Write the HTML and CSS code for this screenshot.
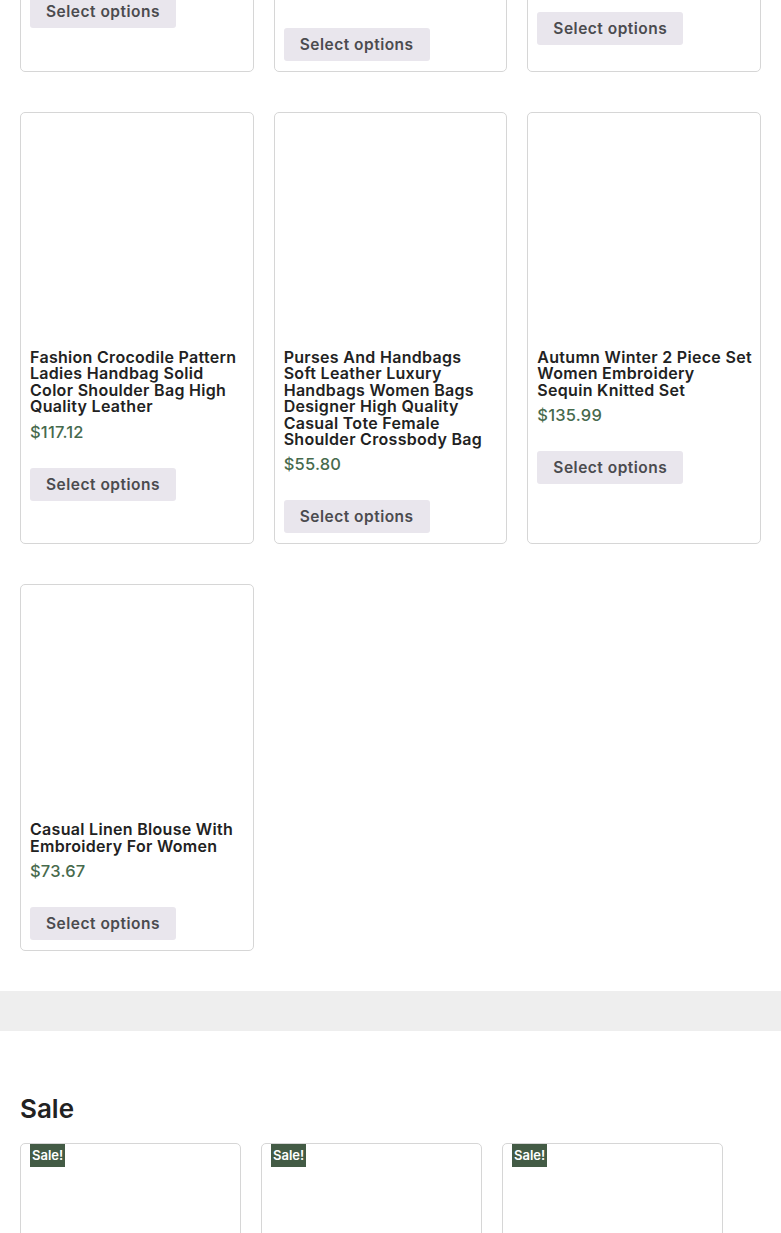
FILE: index.html
```html
<!DOCTYPE html>
<html lang="en">
<head>
<meta charset="utf-8">
<title>Shop</title>
<link rel="stylesheet" href="styles.css">
</head>
<body>
<main class="shop">
  <div class="clip">
    <ul class="grid">
      <li class="card">
        <div class="thumb"></div>
        <h2 class="title">Knitted Cardigan Sweater<br>For Women</h2>
        <span class="price">$48.20</span>
        <a class="button" href="#">Select options</a>
      </li>
      <li class="card">
        <div class="thumb"></div>
        <h2 class="title">Vintage Leather Crossbody<br>Bag Women Small Square<br>Shoulder Messenger<br>Purse</h2>
        <span class="price">$39.90</span>
        <a class="button" href="#">Select options</a>
      </li>
      <li class="card">
        <div class="thumb"></div>
        <h2 class="title">Women Casual Loose<br>Long Sleeve Solid Color<br>Shirt</h2>
        <span class="price">$52.10</span>
        <a class="button" href="#">Select options</a>
      </li>
    </ul>
  </div>

  <ul class="grid rows">
    <li class="card">
      <div class="thumb"></div>
      <h2 class="title">Fashion Crocodile Pattern<br>Ladies Handbag Solid<br>Color Shoulder Bag High<br>Quality Leather</h2>
      <span class="price">$117.12</span>
      <a class="button" href="#">Select options</a>
    </li>
    <li class="card">
      <div class="thumb"></div>
      <h2 class="title">Purses And Handbags<br>Soft Leather Luxury<br>Handbags Women Bags<br>Designer High Quality<br>Casual Tote Female<br>Shoulder Crossbody Bag</h2>
      <span class="price">$55.80</span>
      <a class="button" href="#">Select options</a>
    </li>
    <li class="card">
      <div class="thumb"></div>
      <h2 class="title">Autumn Winter 2 Piece Set<br>Women Embroidery<br>Sequin Knitted Set</h2>
      <span class="price">$135.99</span>
      <a class="button" href="#">Select options</a>
    </li>
    <li class="card">
      <div class="thumb"></div>
      <h2 class="title">Casual Linen Blouse With<br>Embroidery For Women</h2>
      <span class="price">$73.67</span>
      <a class="button" href="#">Select options</a>
    </li>
  </ul>
</main>

<div class="band"></div>

<section class="sale">
  <h2 class="sale-heading">Sale</h2>
  <ul class="sale-grid">
    <li class="card sale-card">
      <span class="badge">Sale!</span>
      <div class="thumb"></div>
    </li>
    <li class="card sale-card">
      <span class="badge">Sale!</span>
      <div class="thumb"></div>
    </li>
    <li class="card sale-card">
      <span class="badge">Sale!</span>
      <div class="thumb"></div>
    </li>
  </ul>
</section>
</body>
</html>
```

FILE: styles.css
```css
* { box-sizing: border-box; }

body {
  margin: 0;
  background: #fff;
  color: #222;
  font-family: Inter, "Noto Sans", sans-serif;
}

.shop {
  padding: 0 20px;
}

.clip {
  height: 72px;
  overflow: hidden;
  display: flex;
  flex-direction: column;
  justify-content: flex-end;
}

.grid {
  list-style: none;
  margin: 0;
  padding: 0;
  display: grid;
  grid-template-columns: repeat(3, minmax(0, 1fr));
  column-gap: 20px;
  row-gap: 40px;
}

.rows {
  margin-top: 40px;
}

.card {
  position: relative;
  display: flex;
  flex-direction: column;
  align-items: flex-start;
  min-width: 0;
  border: 1px solid #d6d6d6;
  border-radius: 5px;
  padding: 9px 9px 10px;
  background: #fff;
}

.thumb {
  width: 100%;
  height: 213px;
  margin-bottom: 14px;
}

.title {
  margin: 0 0 5px;
  font-size: 16px;
  line-height: 16.4px;
  font-weight: 600;
  letter-spacing: 0.3px;
  white-space: nowrap;
  color: #222;
}

.price {
  font-size: 16.5px;
  line-height: 24px;
  font-weight: 500;
  letter-spacing: 0.2px;
  color: #476a4d;
}

.button {
  display: block;
  margin-top: 24px;
  width: 146px;
  height: 33px;
  line-height: 33px;
  text-align: center;
  background: #e9e6ed;
  color: #4b4b4f;
  font-size: 15.5px;
  font-weight: 600;
  letter-spacing: 0.5px;
  text-decoration: none;
  border-radius: 3px;
}

.band {
  margin-top: 40px;
  height: 40px;
  background: #eeeeee;
}

.sale {
  padding: 62px 20px 0;
}

.sale-heading {
  margin: 0 0 18px;
  font-size: 26px;
  line-height: 32px;
  font-weight: 600;
  color: #222;
}

.sale-grid {
  list-style: none;
  margin: 0;
  padding: 0;
  display: grid;
  grid-template-columns: repeat(3, 221px);
  column-gap: 20px;
}

.sale-card {
  min-height: 300px;
}

.badge {
  position: absolute;
  top: 0;
  left: 9px;
  height: 23px;
  line-height: 23px;
  padding: 0 2px;
  background: #435b45;
  color: #fff;
  font-size: 13px;
  font-weight: 600;
}
```
